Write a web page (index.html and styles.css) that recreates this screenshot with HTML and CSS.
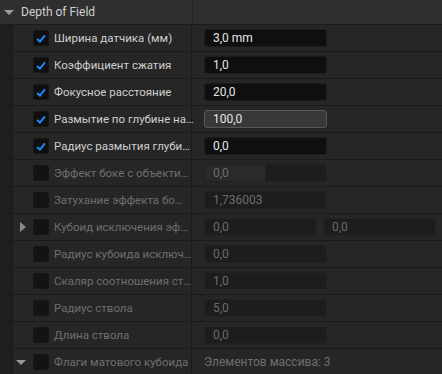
FILE: index.html
```html
<!DOCTYPE html>
<html lang="en">
<head>
    <meta charset="UTF-8">
    <title>Depth of Field</title>
    <link rel="stylesheet" href="styles.css">
</head>
<body>

    <div class="panel">

        <!-- Category header -->
        <div class="header-row">
            <div class="header-name">
                <span class="arrow-down"></span>
                <span>Depth of Field</span>
            </div>
            <div class="header-value"></div>
        </div>

        <div class="row">
            <div class="strip"></div>
            <div class="name">
                <span class="check on"><svg viewBox="0 0 16 16"><path d="M3.5 8.5 L6.8 11.5 L12.5 4.5"/></svg></span>
                <span class="label">Ширина датчика (мм)</span>
            </div>
            <div class="value"><span class="field">3,0 mm</span></div>
        </div>

        <div class="row">
            <div class="strip"></div>
            <div class="name">
                <span class="check on"><svg viewBox="0 0 16 16"><path d="M3.5 8.5 L6.8 11.5 L12.5 4.5"/></svg></span>
                <span class="label">Коэффициент сжатия</span>
            </div>
            <div class="value"><span class="field">1,0</span></div>
        </div>

        <div class="row">
            <div class="strip"></div>
            <div class="name">
                <span class="check on"><svg viewBox="0 0 16 16"><path d="M3.5 8.5 L6.8 11.5 L12.5 4.5"/></svg></span>
                <span class="label">Фокусное расстояние</span>
            </div>
            <div class="value"><span class="field">20,0</span></div>
        </div>

        <div class="row">
            <div class="strip"></div>
            <div class="name">
                <span class="check on"><svg viewBox="0 0 16 16"><path d="M3.5 8.5 L6.8 11.5 L12.5 4.5"/></svg></span>
                <span class="label">Размытие по глубине на…</span>
            </div>
            <div class="value"><span class="field hover">100,0</span></div>
        </div>

        <div class="row">
            <div class="strip"></div>
            <div class="name">
                <span class="check on"><svg viewBox="0 0 16 16"><path d="M3.5 8.5 L6.8 11.5 L12.5 4.5"/></svg></span>
                <span class="label">Радиус размытия глуби…</span>
            </div>
            <div class="value"><span class="field">0,0</span></div>
        </div>

        <!-- Disabled properties -->
        <div class="row off">
            <div class="strip"></div>
            <div class="name">
                <span class="check"></span>
                <span class="label">Эффект боке с объекти…</span>
            </div>
            <div class="value"><span class="field slider"><span class="fill" style="width: 60px"></span><span class="num">0,0</span></span></div>
        </div>

        <div class="row off">
            <div class="strip"></div>
            <div class="name">
                <span class="check"></span>
                <span class="label">Затухание эффекта бо…</span>
            </div>
            <div class="value"><span class="field">1,736003</span></div>
        </div>

        <div class="row off">
            <div class="strip"></div>
            <div class="name">
                <span class="arrow-right"></span>
                <span class="check"></span>
                <span class="label">Кубоид исключения эф…</span>
            </div>
            <div class="value pair">
                <span class="field half">0,0</span>
                <span class="field half">0,0</span>
            </div>
        </div>

        <div class="row off">
            <div class="strip"></div>
            <div class="name">
                <span class="check"></span>
                <span class="label">Радиус кубоида исключ…</span>
            </div>
            <div class="value"><span class="field">0,0</span></div>
        </div>

        <div class="row off">
            <div class="strip"></div>
            <div class="name">
                <span class="check"></span>
                <span class="label">Скаляр соотношения ст…</span>
            </div>
            <div class="value"><span class="field">1,0</span></div>
        </div>

        <div class="row off">
            <div class="strip"></div>
            <div class="name">
                <span class="check"></span>
                <span class="label">Радиус ствола</span>
            </div>
            <div class="value"><span class="field">5,0</span></div>
        </div>

        <div class="row off">
            <div class="strip"></div>
            <div class="name">
                <span class="check"></span>
                <span class="label">Длина ствола</span>
            </div>
            <div class="value"><span class="field">0,0</span></div>
        </div>

        <div class="row off">
            <div class="strip"></div>
            <div class="name">
                <span class="arrow-down small"></span>
                <span class="check"></span>
                <span class="label">Флаги матового кубоида</span>
            </div>
            <div class="value"><span class="count">Элементов массива: 3</span></div>
        </div>

    </div>

</body>
</html>
```

FILE: styles.css
```css
body {
    margin: 0;
    background-color: #262626;
    font-family: Roboto, 'Noto Sans', sans-serif;
    font-size: 12px;
    color: #c8c8c8;
}

.panel {
    width: 442px;
    overflow: hidden;
}

/* Category header */
.header-row {
    display: flex;
    height: 24px;
    background-color: #2f2f2f;
    border-bottom: 1px solid #1b1b1b;
}

.header-name {
    width: 192px;
    display: flex;
    align-items: center;
    border-right: 1px solid #242424;
    color: #d0d0d0;
}

.header-name .arrow-down {
    margin: 0 7px 0 4px;
}

.arrow-down {
    width: 0;
    height: 0;
    border-left: 5px solid transparent;
    border-right: 5px solid transparent;
    border-top: 5px solid #9a9a9a;
}

.arrow-right {
    width: 0;
    height: 0;
    border-top: 5px solid transparent;
    border-bottom: 5px solid transparent;
    border-left: 6px solid #8a8a8a;
}

/* Property rows */
.row {
    display: flex;
    height: 26px;
    border-bottom: 1px solid #1b1b1b;
}

.strip {
    width: 12px;
    background-color: #1f1f1f;
    border-right: 1px solid #191919;
}

.name {
    width: 179px;
    display: flex;
    align-items: center;
    padding-left: 20px;
    box-sizing: border-box;
    border-right: 1px solid #1b1b1b;
    position: relative;
    font-size: 11.5px;
}

/* expander arrows sit in the indent, left of the checkbox */
.name .arrow-right {
    position: absolute;
    left: 7px;
}

.name .arrow-down {
    position: absolute;
    left: 3px;
}

.label {
    margin-left: 5px;
    white-space: nowrap;
    color: #cfcfcf;
}

.check {
    flex: none;
    width: 16px;
    height: 16px;
    border-radius: 2px;
    background-color: #0f0f0f;
    border: 1px solid #161616;
    box-sizing: border-box;
    display: flex;
    align-items: center;
    justify-content: center;
}

.check svg {
    width: 15px;
    height: 15px;
    fill: none;
    stroke: #1a8cff;
    stroke-width: 2.2;
}

.value {
    flex: 1;
    display: flex;
    align-items: center;
    padding-left: 12px;
}

.value.pair {
    gap: 6px;
}

.field {
    width: 123px;
    height: 18px;
    box-sizing: border-box;
    background-color: #0f0f0f;
    border: 1px solid #1c1c1c;
    border-radius: 3px;
    padding-left: 8px;
    display: flex;
    align-items: center;
    color: #e6e6e6;
    position: relative;
    overflow: hidden;
}

.field.hover {
    background-color: #383838;
    border-color: #575757;
}

.field.half {
    width: 113px;
}

/* Disabled state */
.row.off .label,
.row.off .count {
    color: #6e6e6e;
}

.row.off .check {
    background-color: #131313;
}

.row.off .field {
    background-color: #1d1d1d;
    border-color: #222222;
    color: #6c6c6c;
}

.field.slider .fill {
    position: absolute;
    left: 0;
    top: 0;
    bottom: 0;
    background-color: #2a2a2a;
}

.field.slider .num {
    position: relative;
}

.count {
    white-space: nowrap;
}
```
